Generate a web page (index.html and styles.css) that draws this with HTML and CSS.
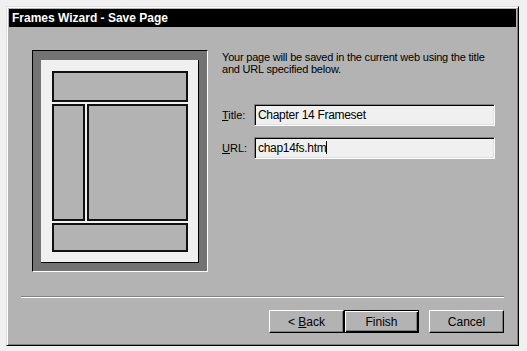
FILE: index.html
```html
<!DOCTYPE html>
<html lang="en">
<head>
    <meta charset="UTF-8">
    <meta name="viewport" content="width=device-width, initial-scale=1.0">
    <title>Frames Wizard - Save Page</title>
    <link rel="stylesheet" href="styles.css">
</head>
<body>
    <div class="window">
        <div class="titlebar">Frames Wizard - Save Page</div>
        <div class="content">
            <div class="main">
                <div class="preview">
                    <div class="page">
                        <div class="frame top"></div>
                        <div class="frame"></div>
                        <div class="frame"></div>
                        <div class="frame bottom"></div>
                    </div>
                </div>
                <div class="form">
                    <p class="intro">Your page will be saved in the current web using the title and URL specified below.</p>
                    <div class="field">
                        <label><u>T</u>itle:</label>
                        <div class="textbox">Chapter 14 Frameset</div>
                    </div>
                    <div class="field">
                        <label><u>U</u>RL:</label>
                        <div class="textbox">chap14fs.htm<span class="caret"></span></div>
                    </div>
                </div>
            </div>
            <div class="separator"></div>
            <div class="buttons">
                <button>&lt; <u>B</u>ack</button>
                <button class="default">Finish</button>
                <button class="cancel">Cancel</button>
            </div>
        </div>
    </div>
</body>
</html>
```

FILE: styles.css
```css
body {
    margin: 0;
    background-color: #f0f0f0;
    font-family: "Liberation Sans", Arial, sans-serif;
    font-size: 11px;
    color: #000;
}
.window {
    margin: 6px 0 0 6px;
    width: 513px;
    height: 340px;
    box-sizing: border-box;
    padding: 2px;
    background: #b3b3b3;
    border: 1px solid;
    border-color: #dfdfdf #000 #000 #dfdfdf;
    box-shadow: inset 1px 1px #fff, inset -1px -1px #808080;
}
.titlebar {
    height: 18px;
    line-height: 18px;
    padding-left: 3px;
    background: #000;
    color: #fff;
    font-weight: bold;
    font-size: 12px;
}
.content {
    padding: 23px 12px 0 12px;
}
.main {
    display: flex;
    padding-left: 11px;
}
.preview {
    width: 176px;
    height: 222px;
    box-sizing: border-box;
    padding: 9px 0 0 8px;
    background: #737373;
    border: 1px solid;
    border-color: #000 #fff #fff #000;
}
.page {
    width: 158px;
    height: 203px;
    box-sizing: border-box;
    background: #f0f0f0;
    border-right: 1px solid #000;
    border-bottom: 1px solid #000;
    padding: 11px 10px 10px 11px;
    display: grid;
    grid-template-columns: 33px 1fr;
    grid-template-rows: 31px 1fr 29px;
    gap: 2px;
}
.frame {
    background: #b3b3b3;
    border: 2px solid #111;
}
.frame.top, .frame.bottom {
    grid-column: 1 / 3;
}
.form {
    margin-left: 14px;
    width: 273px;
}
.intro {
    margin: 1px 0 0;
    line-height: 12px;
    letter-spacing: -0.2px;
}
.field {
    display: flex;
    align-items: center;
    margin-top: 11px;
}
.intro + .field {
    margin-top: 29px;
}
.field label {
    width: 32px;
}
.textbox {
    width: 241px;
    height: 22px;
    box-sizing: border-box;
    padding: 0 3px;
    background: #f0f0f0;
    border: 1px solid;
    border-color: #808080 #fff #fff #808080;
    box-shadow: inset 1px 1px #000, inset -1px -1px #dfdfdf;
    line-height: 20px;
    font-size: 12px;
    letter-spacing: -0.3px;
}
.caret {
    display: inline-block;
    width: 0;
    height: 13px;
    border-left: 1px solid #000;
    vertical-align: -2px;
}
.separator {
    margin-top: 24px;
    border-top: 1px solid #808080;
    border-bottom: 1px solid #fff;
}
.buttons {
    display: flex;
    justify-content: flex-end;
    margin-top: 12px;
}
button {
    width: 75px;
    height: 23px;
    padding: 0;
    font-family: inherit;
    font-size: 12px;
    background: #b3b3b3;
    border: 1px solid;
    border-color: #fff #000 #000 #fff;
    box-shadow: inset -1px -1px #808080;
}
button.default {
    border: 1px solid #000;
    box-shadow: inset 1px 1px #fff, inset -1px -1px #000, inset -2px -2px #808080;
}
button.cancel {
    margin-left: 10px;
}
```
